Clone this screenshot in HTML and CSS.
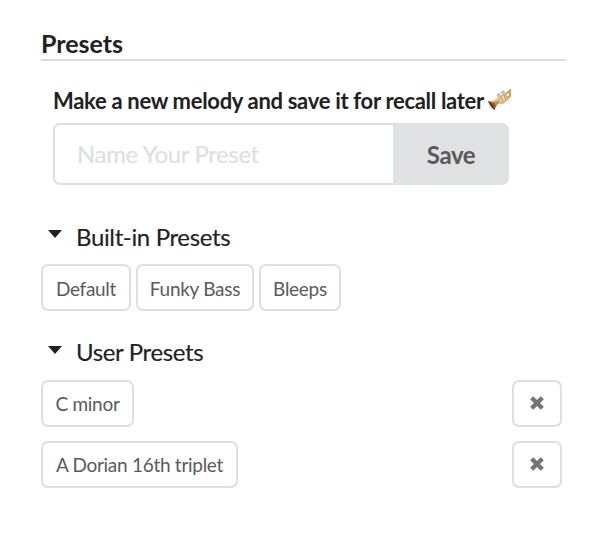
FILE: index.html
```html
<!DOCTYPE html>
<html lang="en">
<head>
<meta charset="utf-8">
<title>Presets</title>
<link rel="stylesheet" href="styles.css">
</head>
<body>
<main class="panel">
  <h1 class="title">Presets</h1>
  <form class="save-form">
    <label class="prompt" for="name"><span>Make a new melody and save it for recall later</span>
      <svg class="trumpet" viewBox="0 0 24 22" aria-hidden="true">
        <path d="M8 14 17 8" stroke="#c99b52" stroke-width="3"/>
        <path d="M0 12Q5 13 9 10L12 13Q8 16 7 21Q3 19 0 12Z" fill="#c48b43"/>
        <path d="M0 12Q6 14 7 21Q3 20 0 12Z" fill="#684021"/>
        <path d="M5 13 7 18" stroke="#8e5a2a" stroke-width="2"/>
        <path d="M4 12.5Q8 13 11 11" fill="none" stroke="#edc77d" stroke-width="1.3"/>
        <path d="M10 9 17 5 20 10 15 14 12 14Z" fill="#efd6a6" stroke="#d9ad66" stroke-width="1.3"/>
        <path d="M13 8 15 13M16 6 18 11" stroke="#b58c4e" stroke-width="1"/>
        <path d="M9.5 5 12 7M14 2 16 5" stroke="#b8c0c8" stroke-width="3.6"/>
        <path d="M18 5 22 1.5V7L19 9" fill="none" stroke="#d4a352" stroke-width="2.2"/>
      </svg>
    </label>
    <div class="field">
      <input class="name" id="name" type="text" placeholder="Name Your Preset">
      <button class="save" type="button">Save</button>
    </div>
  </form>
  <section class="group">
    <h2 class="group-title"><span class="caret"></span><span>Built-in Presets</span></h2>
    <div class="buttons">
      <button class="preset default">Default</button>
      <button class="preset funky">Funky Bass</button>
      <button class="preset bleeps">Bleeps</button>
    </div>
  </section>
  <section class="group user">
    <h2 class="group-title"><span class="caret"></span><span>User Presets</span></h2>
    <div class="row">
      <button class="preset minor">C minor</button>
      <button class="preset remove" aria-label="Remove C minor"><svg class="cross" viewBox="0 0 16 16"><path d="M2.7 2.7 13.3 13.3M13.3 2.7 2.7 13.3"/></svg></button>
    </div>
    <div class="row">
      <button class="preset dorian">A Dorian 16th triplet</button>
      <button class="preset remove" aria-label="Remove A Dorian 16th triplet"><svg class="cross" viewBox="0 0 16 16"><path d="M2.7 2.7 13.3 13.3M13.3 2.7 2.7 13.3"/></svg></button>
    </div>
  </section>
</main>
</body>
</html>
```
FILE: styles.css
```css
* { box-sizing: border-box; }
body {
  margin: 0;
  background: #fff;
  color: #212124;
  font-family: Lato, sans-serif;
}
button, input { font-family: inherit; }
.panel { width: 566px; padding: 28px 0 0 41px; }
.title {
  height: 33px;
  margin: 0;
  border-bottom: 2px solid #dcdcdd;
  font-size: 25px;
  line-height: 30px;
  font-weight: 700;
}
.save-form { width: 456px; margin: 26px 0 0 12px; }
.prompt {
  display: flex;
  align-items: center;
  height: 28px;
  font-size: 22px;
  line-height: 28px;
  font-weight: 700;
  letter-spacing: -0.31px;
  white-space: nowrap;
}
.trumpet { width: 24px; height: 22px; margin: -2px 0 0 4px; flex: none; }
.field { display: flex; height: 62px; margin-top: 8px; }
.name {
  width: 340px;
  min-width: 0;
  padding: 0 0 1px 22px;
  border: 2px solid #dedfe0;
  border-right: 0;
  border-radius: 7px 0 0 7px;
  background: #fff;
  color: #212124;
  font-size: 24px;
  letter-spacing: -0.38px;
  outline: 0;
}
.name::placeholder {
  color: #dedfe0;
  opacity: 1;
  -webkit-text-stroke: 0.2px #dedfe0;
}
.save {
  flex: 1;
  padding: 0;
  border: 0;
  border-radius: 0 7px 7px 0;
  background: #e0e1e2;
  color: #5a5a5a;
  font-size: 24px;
  font-weight: 700;
  letter-spacing: -0.4px;
}
.group { margin-top: 37px; }
.group-title {
  display: flex;
  height: 30px;
  margin: 0 0 12px;
  font-size: 24px;
  line-height: 30px;
  font-weight: 400;
  letter-spacing: -0.36px;
  -webkit-text-stroke: 0.15px #212124;
}
.caret {
  width: 14px;
  height: 8px;
  margin: 8px 14px 0 7px;
  background: #212124;
  clip-path: polygon(0 0, 100% 0, 50% 100%);
}
.buttons { display: flex; gap: 5px; }
.preset {
  height: 47px;
  padding: 1px 0 0;
  border: 2px solid #dedfe0;
  border-radius: 7px;
  background: #fff;
  color: #5a5a5a;
  font-size: 19px;
  letter-spacing: -0.28px;
  white-space: nowrap;
}
.default { width: 90px; }
.funky { width: 118px; }
.bleeps { width: 82px; }
.user { margin-top: 26px; }
.user .group-title { margin-bottom: 13px; }
.user .caret { margin-top: 9px; }
.row { display: flex; justify-content: space-between; width: 521px; }
.row + .row { margin-top: 14px; }
.minor, .dorian { padding: 0 0 1px; }
.minor { width: 93px; }
.dorian { width: 197px; }
.remove { display: grid; place-items: center; width: 50px; padding: 0 0 1px; }
.cross { width: 16px; height: 16px; fill: none; stroke: #737475; stroke-width: 4.4; }
```
